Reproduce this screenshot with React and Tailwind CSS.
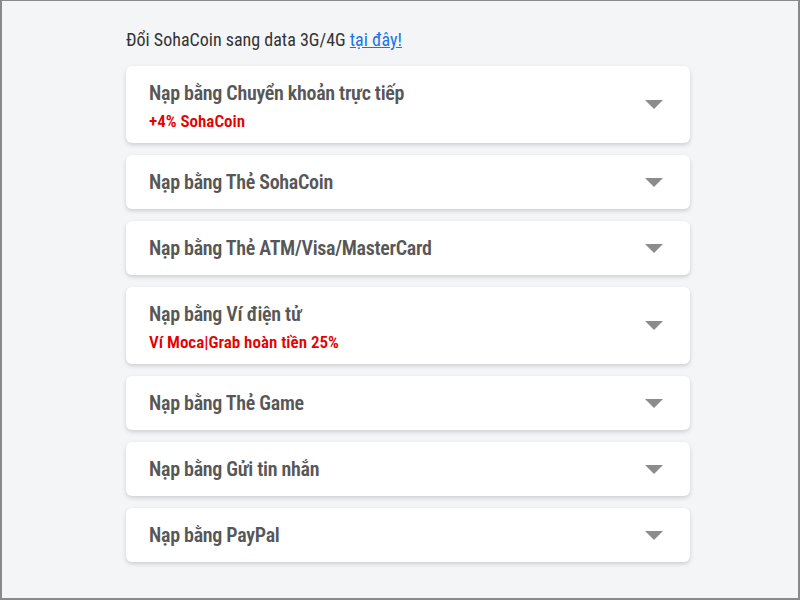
const methods = [
  { title: 'Nạp bằng Chuyển khoản trực tiếp', note: '+4% SohaCoin' },
  { title: 'Nạp bằng Thẻ SohaCoin' },
  { title: 'Nạp bằng Thẻ ATM/Visa/MasterCard' },
  { title: 'Nạp bằng Ví điện tử', note: 'Ví Moca|Grab hoàn tiền 25%' },
  { title: 'Nạp bằng Thẻ Game' },
  { title: 'Nạp bằng Gửi tin nhắn' },
  { title: 'Nạp bằng PayPal' },
]

function Caret() {
  return (
    <svg width="18" height="9" viewBox="0 0 18 9" className="flex-shrink-0">
      <path d="M0 0 L18 0 L9 9 Z" fill="#8c8c8c" />
    </svg>
  )
}

function MethodCard({ title, note }) {
  return (
    <div className="flex items-center justify-between bg-white rounded-md shadow-[0_2px_4px_rgba(0,0,0,0.16)] pl-[23px] pr-[27px] pt-[14px] pb-[14px]">
      <div>
        <div className="text-[20px] leading-[26px] font-semibold tracking-[-0.3px] text-[#575757]">{title}</div>
        {note && (
          <div className="text-[17px] leading-[20px] font-semibold text-[#e60000] mt-[5px] -mb-[2px]">{note}</div>
        )}
      </div>
      <Caret />
    </div>
  )
}

export default function App() {
  return (
    <div
      className="w-[800px] h-[600px] bg-[#f4f5f7] border-t border-x-2 border-b-2 border-[#8a8a8a] overflow-hidden"
      style={{ fontFamily: '"Roboto Condensed", "Open Sans Condensed", sans-serif' }}
    >
      <div className="ml-[124px] w-[564px] pt-[27px]">
        <p className="text-[18px] leading-[24px] text-[#333] mb-[14px]">
          Đổi SohaCoin sang data 3G/4G{' '}
          <a href="#" className="text-[#1a73e8] underline">tại đây!</a>
        </p>
        <div className="flex flex-col gap-[12px]">
          {methods.map((m) => (
            <MethodCard key={m.title} {...m} />
          ))}
        </div>
      </div>
    </div>
  )
}
